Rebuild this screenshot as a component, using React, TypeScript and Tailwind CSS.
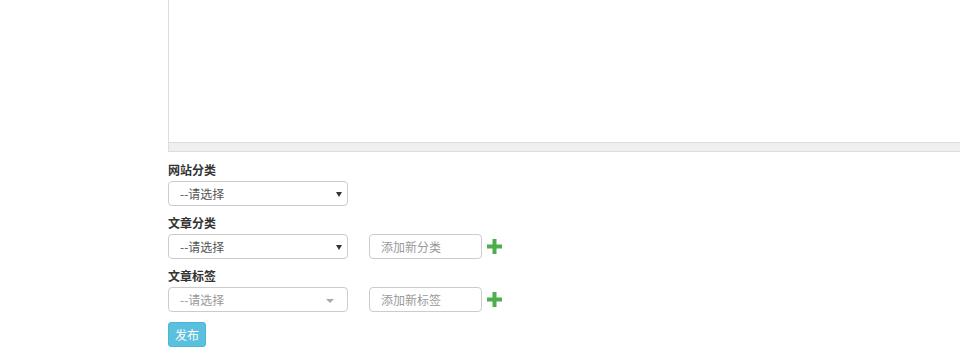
import React from 'react';

const font = { fontFamily: '"Noto Sans CJK SC", "Noto Sans", sans-serif' };

const Plus: React.FC = () => (
  <svg width="15" height="15" viewBox="0 0 15 15" className="ml-[5px]">
    <path d="M5.5 0h4v5.5h5.5v4h-5.5v5.5h-4v-5.5h-5.5v-4h5.5z" fill="#4cae4c" />
  </svg>
);

const Select: React.FC<{ light?: boolean }> = ({ light }) => (
  <div className="relative w-[180px] h-[25px] border border-[#ccc] rounded-[4px] bg-white flex items-center pl-[11px] text-[12px]">
    <span className={light ? 'text-[#999]' : 'text-[#555]'}>--请选择</span>
    {light ? (
      <span className="absolute right-[13px] top-[11px] w-0 h-0 border-l-[4px] border-r-[4px] border-t-[4px] border-l-transparent border-r-transparent border-t-[#aaa]" />
    ) : (
      <span className="absolute right-[5px] top-[10px] w-0 h-0 border-l-[3px] border-r-[3px] border-t-[5px] border-l-transparent border-r-transparent border-t-[#333]" />
    )}
  </div>
);

const AddInput: React.FC<{ placeholder: string }> = ({ placeholder }) => (
  <div className="flex items-center ml-[21px]">
    <div className="w-[113px] h-[25px] border border-[#ccc] rounded-[4px] bg-white flex items-center pl-[11px] text-[12px] text-[#999]">
      {placeholder}
    </div>
    <Plus />
  </div>
);

export default function App() {
  return (
    <div className="w-[960px] h-[360px] overflow-hidden bg-white" style={font}>
      <div className="pl-[168px]">
        <div className="w-[820px] h-[152px] border-l border-[#ddd] flex flex-col">
          <div className="flex-1" />
          <div className="h-[10px] bg-[#efefef] border-t border-b border-[#dcdcdc]" />
        </div>

        <div className="mt-[9px] h-[17px] text-[12px] font-bold text-[#333] leading-[17px] mb-[3px]">网站分类</div>
        <Select />

        <div className="mt-[8px] h-[17px] text-[12px] font-bold text-[#333] leading-[17px] mb-[3px]">文章分类</div>
        <div className="flex items-center">
          <Select />
          <AddInput placeholder="添加新分类" />
        </div>

        <div className="mt-[8px] h-[17px] text-[12px] font-bold text-[#333] leading-[17px] mb-[3px]">文章标签</div>
        <div className="flex items-center">
          <Select light />
          <AddInput placeholder="添加新标签" />
        </div>

        <button className="mt-[10px] w-[38px] h-[25px] rounded-[3px] bg-[#5bc0de] border border-[#46b8da] text-white text-[12px] flex items-center justify-center">
          发布
        </button>
      </div>
    </div>
  );
}
